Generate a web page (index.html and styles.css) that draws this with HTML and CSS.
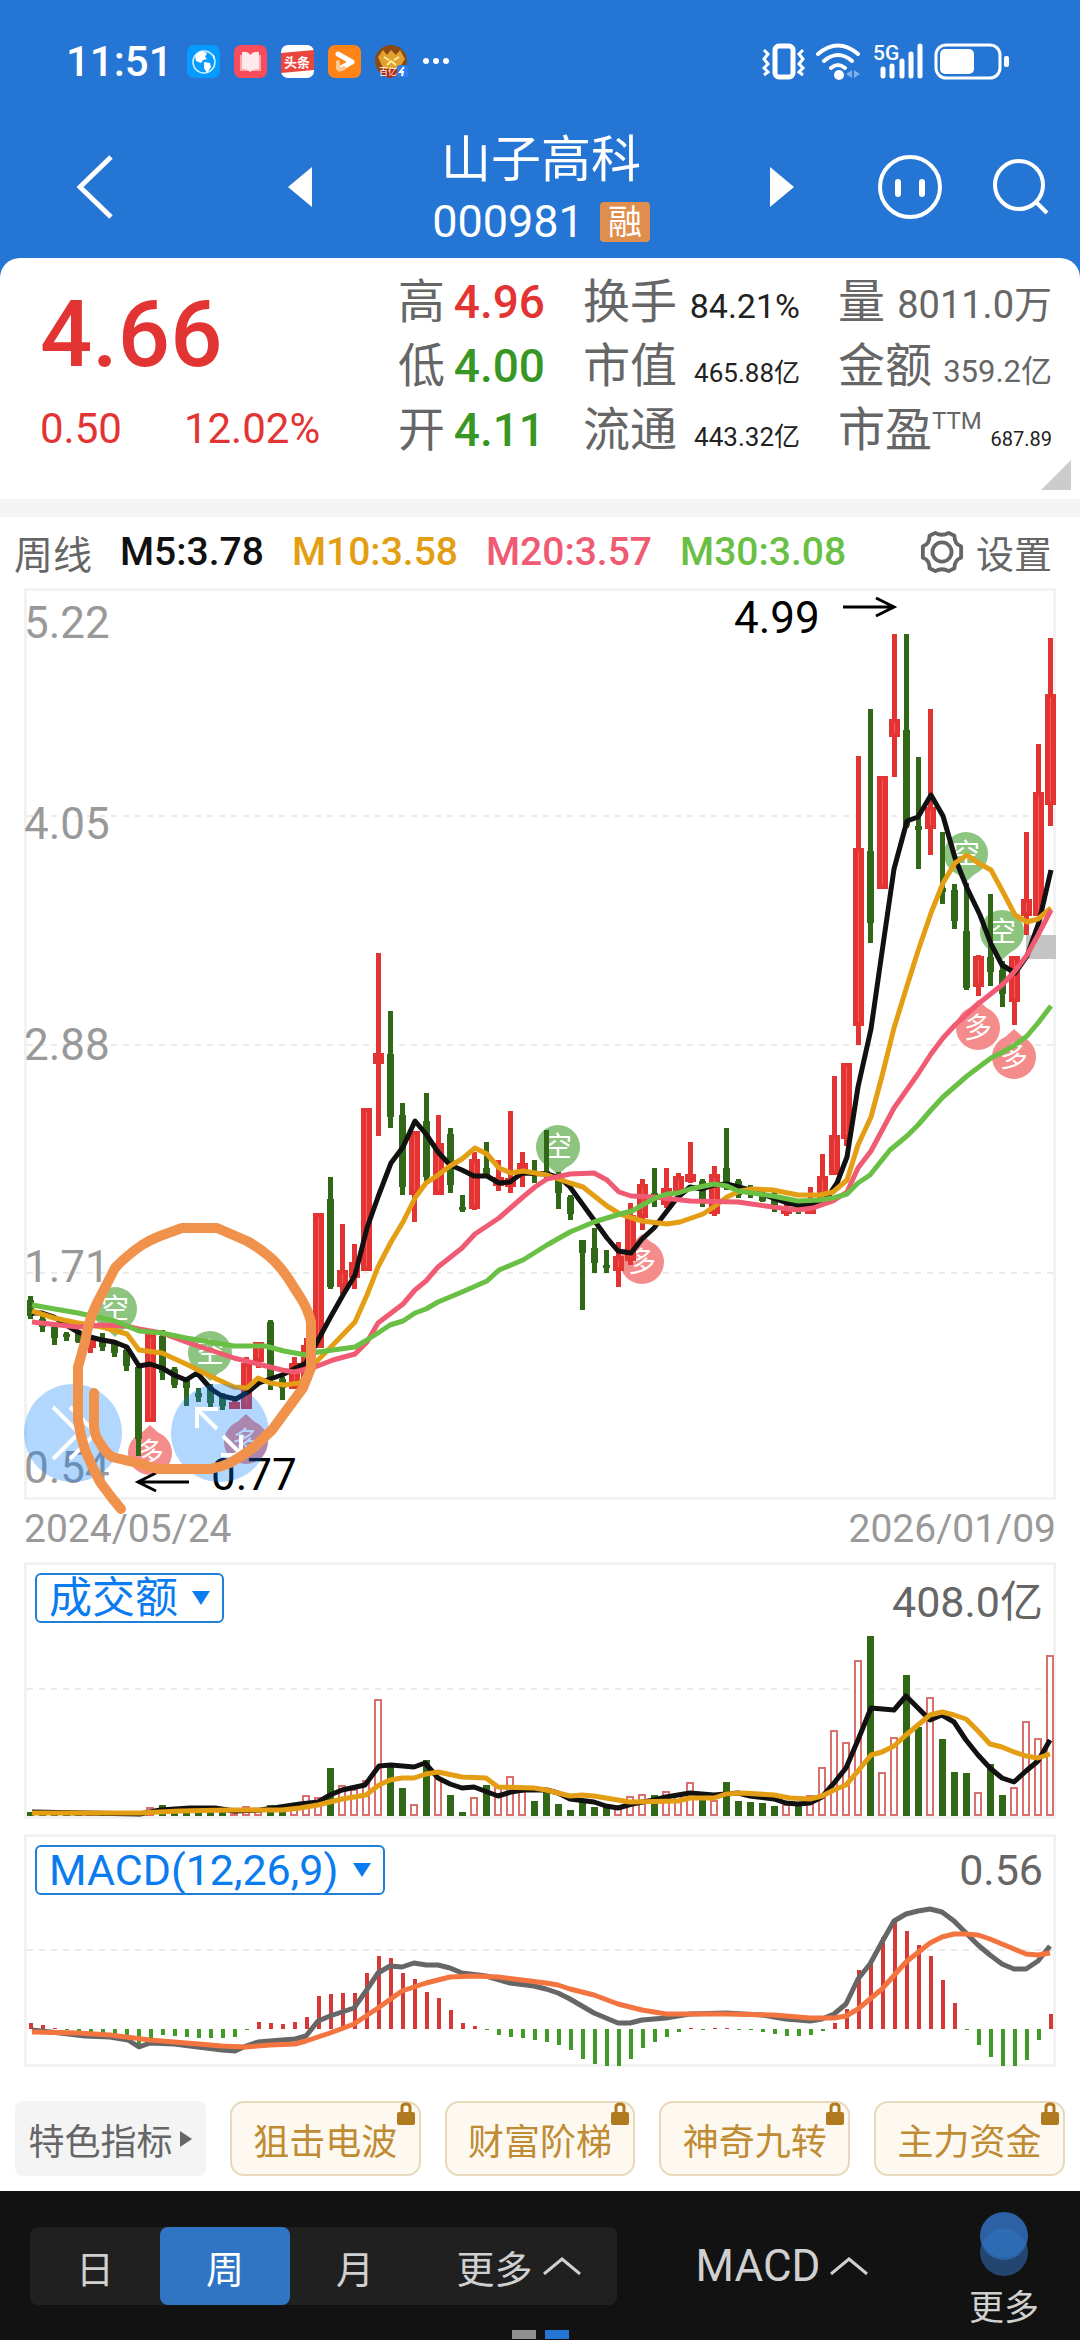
FILE: index.html
```html
<!DOCTYPE html>
<html lang="zh-CN">
<head>
  <meta charset="UTF-8">
  <meta name="viewport" content="width=device-width, initial-scale=1.0">
  <title>山子高科 000981</title>
  <link rel="stylesheet" href="styles.css">
</head>
<body>
  <header class="top">
    <div class="status">
      <span class="time">11:51</span>
      <svg class="app" viewBox="0 0 33 33"><rect width="33" height="33" rx="7" fill="#069cff"/><circle cx="17" cy="17" r="11" fill="none" stroke="#cfeeff" stroke-width="1.5"/><path d="M8 10l6-4 6 2-2 4 2 2-4 1-2 3-5-2zM17 17l6 1 1 4-4 6-3-5zM26 9l2 3-2 2z" fill="#fff"/></svg>
      <svg class="app" viewBox="0 0 33 33"><rect width="33" height="33" rx="7" fill="#fa4c5a"/><path d="M6 10h21v16H6z" fill="#fda6ab"/><path d="M8 7q6-1 8 3 3-4 9-3v17q-6 0-9 3-2-3-8-3z" fill="#ffe9ea"/></svg>
      <svg class="app" viewBox="0 0 33 33"><rect width="33" height="33" rx="7" fill="#fff"/><path d="M0 8l33-3v20L0 28z" fill="#ea4640"/><text x="16" y="22" class="app-name">头条</text></svg>
      <svg class="app" viewBox="0 0 33 33"><rect width="33" height="33" rx="7" fill="#ff8416"/><path d="M10 9l14 8-11 6" fill="none" stroke="#fff" stroke-width="5" stroke-linecap="round" stroke-linejoin="round"/><path d="M10 17v6q1 3 6 0" fill="none" stroke="#ffc892" stroke-width="4" stroke-linecap="round"/></svg>
      <svg class="app" viewBox="0 0 33 33"><circle cx="16" cy="16" r="16" fill="#8a4a14"/><path d="M3 12l5-7 4 5 4-5 5 5 4-5 5 9-6 9-8 4-8-4z" fill="#e2a02f"/><path d="M9 12l5 3M24 12l-5 3M12 20l4-4 5 4" stroke="#fff0a0" stroke-width="2" fill="none"/><path d="M4 24h20v5l-8 4-8-2z" fill="#b02a12"/><text x="13" y="30" class="app-tag">百亿</text><rect x="22" y="20" width="11" height="12" rx="3" fill="#2f7df4"/><path d="M29 22l-4 5h3l-1 4" stroke="#fff" stroke-width="2" fill="none"/></svg>
      <svg class="dots" viewBox="0 0 28 8"><circle cx="4" cy="4" r="3" fill="#fff"/><circle cx="14" cy="4" r="3" fill="#fff"/><circle cx="24" cy="4" r="3" fill="#fff"/></svg>
      <svg class="signals" viewBox="0 -6 248 52">
        <g fill="none" stroke="#fff">
          <rect x="13" y="5" width="18" height="31" rx="4" stroke-width="5"/>
          <path d="M2 9l4 4-4 5 4 5-4 4 4 4-4 3M41 9l-4 4 4 5-4 5 4 4-4 4 4 3" stroke-width="3"/>
          <path d="M56 13q20-17 40 0M62 20q14-12 28 0M69 27q7-6 14 0" stroke-width="4" stroke-linecap="round"/>
          <path d="M121 28v7M130 25v10M140 20v15M149 13v22M158 5v30" stroke-width="5" stroke-linecap="round"/>
          <rect x="174" y="4" width="64" height="33" rx="10" stroke-width="3"/>
        </g>
        <circle cx="77" cy="34" r="5" fill="#fff"/>
        <path d="M84 33l6-4v8zM98 33l-6-4v8z" fill="#7fb0ea"/>
        <text x="111" y="19" class="net">5G</text>
        <rect x="178" y="8" width="34" height="25" rx="5" fill="#fff"/>
        <rect x="242" y="15" width="5" height="11" rx="2" fill="#fff"/>
      </svg>
    </div>
    <nav class="nav">
      <button class="icon back" aria-label="返回"><svg viewBox="0 0 36 66"><path d="M34 3L3 33l31 30" fill="none" stroke="#fff" stroke-width="5"/></svg></button>
      <div class="switcher">
        <button class="icon arrow" aria-label="上一只"><svg viewBox="0 0 24 40"><path d="M24 0v40L0 20z" fill="#fff"/></svg></button>
        <div class="stock">
          <h1>山子高科</h1>
          <p><span>000981</span><span class="badge">融</span></p>
        </div>
        <button class="icon arrow" aria-label="下一只"><svg viewBox="0 0 24 40"><path d="M0 0v40l24-20z" fill="#fff"/></svg></button>
      </div>
      <button class="icon face" aria-label="助手"><svg viewBox="0 0 66 66"><circle cx="33" cy="33" r="30" fill="none" stroke="#fff" stroke-width="4"/><path d="M21 28v12M45 28v12" stroke="#fff" stroke-width="6" stroke-linecap="round"/></svg></button>
      <button class="icon search" aria-label="搜索"><svg viewBox="0 0 56 56"><circle cx="26" cy="26" r="24" fill="none" stroke="#fff" stroke-width="4"/><path d="M43 43l11 11" stroke="#fff" stroke-width="4"/></svg></button>
    </nav>
  </header>

  <section class="quote">
    <div class="price">
      <strong>4.66</strong>
      <p><span>0.50</span><span>12.02%</span></p>
    </div>
    <dl class="col">
      <div><dt>高</dt><dd class="big up">4.96</dd></div>
      <div><dt>低</dt><dd class="big down">4.00</dd></div>
      <div><dt>开</dt><dd class="big down">4.11</dd></div>
    </dl>
    <dl class="col">
      <div><dt>换手</dt><dd class="mid">84.21%</dd></div>
      <div><dt>市值</dt><dd class="small">465.88亿</dd></div>
      <div><dt>流通</dt><dd class="small">443.32亿</dd></div>
    </dl>
    <dl class="col">
      <div><dt>量</dt><dd class="vol">8011.0万</dd></div>
      <div><dt>金额</dt><dd class="amount">359.2亿</dd></div>
      <div><dt>市盈<sup>TTM</sup></dt><dd class="tiny">687.89</dd></div>
    </dl>
    <svg class="corner" viewBox="0 0 30 30"><path d="M30 0v30H0z" fill="#ccc"/></svg>
  </section>

  <main>
    <div class="legend">
      <span class="period">周线</span>
      <span class="m5">M5:3.78</span>
      <span class="m10">M10:3.58</span>
      <span class="m20">M20:3.57</span>
      <span class="m30">M30:3.08</span>
      <button class="settings">
        <svg viewBox="0 0 46 46"><path d="M16 3q7 4 14 0l6 3q0 9 7 11v12q-7 2-7 11l-6 3q-7-4-14 0l-6-3q0-9-7-11V17q7-2 7-11z" fill="none" stroke="#666" stroke-width="4" stroke-linejoin="round"/><circle cx="23" cy="23" r="10" fill="none" stroke="#666" stroke-width="4"/></svg>
        设置
      </button>
    </div>

    <div class="panel">
      <svg id="kline" class="chart" viewBox="27 591 1026 906"></svg>
    </div>
    <div class="dates"><span>2024/05/24</span><span>2026/01/09</span></div>

    <div class="panel">
      <div class="panel-head">
        <label class="picker">
          <select aria-label="成交指标"><option>成交额</option></select>
          <svg viewBox="0 0 18 14"><path d="M0 0h18L9 14z" fill="#0a7cf0"/></svg>
        </label>
        <span>408.0亿</span>
      </div>
      <svg id="volume" class="chart" viewBox="27 1631 1026 185"></svg>
    </div>

    <div class="panel macd">
      <div class="panel-head">
        <label class="picker">
          <select aria-label="技术指标"><option>MACD(12,26,9)</option></select>
          <svg viewBox="0 0 18 14"><path d="M0 0h18L9 14z" fill="#0a7cf0"/></svg>
        </label>
        <span>0.56</span>
      </div>
      <svg id="macd" class="chart" viewBox="27 1903 1026 161"></svg>
    </div>

    <div class="chips">
      <button class="chip plain">特色指标<svg viewBox="0 0 12 16"><path d="M0 0l12 8-12 8z" fill="#666"/></svg></button>
      <button class="chip">狙击电波<svg class="lock" viewBox="0 0 18 24"><path d="M5 11V5q0-3 4-3t4 3v6" fill="none" stroke="#b27a1f" stroke-width="3"/><rect y="10" width="18" height="13" rx="2" fill="#b27a1f"/></svg></button>
      <button class="chip">财富阶梯<svg class="lock" viewBox="0 0 18 24"><path d="M5 11V5q0-3 4-3t4 3v6" fill="none" stroke="#b27a1f" stroke-width="3"/><rect y="10" width="18" height="13" rx="2" fill="#b27a1f"/></svg></button>
      <button class="chip">神奇九转<svg class="lock" viewBox="0 0 18 24"><path d="M5 11V5q0-3 4-3t4 3v6" fill="none" stroke="#b27a1f" stroke-width="3"/><rect y="10" width="18" height="13" rx="2" fill="#b27a1f"/></svg></button>
      <button class="chip">主力资金<svg class="lock" viewBox="0 0 18 24"><path d="M5 11V5q0-3 4-3t4 3v6" fill="none" stroke="#b27a1f" stroke-width="3"/><rect y="10" width="18" height="13" rx="2" fill="#b27a1f"/></svg></button>
    </div>
  </main>

  <footer class="bottom">
    <div class="tabs">
      <button>日</button>
      <button class="active">周</button>
      <button>月</button>
      <button class="wide">更多<svg viewBox="0 0 38 18"><path d="M1 17L19 2l18 15" fill="none" stroke="#d0d0d0" stroke-width="3"/></svg></button>
    </div>
    <button class="indicator">MACD<svg viewBox="0 0 38 18"><path d="M1 17L19 2l18 15" fill="none" stroke="#d0d0d0" stroke-width="3"/></svg></button>
    <button class="more">
      <svg viewBox="0 0 48 64"><circle cx="24" cy="40" r="24" fill="#24456f"/><circle cx="24" cy="24" r="24" fill="#2c62a5"/><path d="M2 31a24 24 0 0 1 44 0 24 24 0 0 1-44 0" fill="#2d6bb3"/></svg>
      更多
    </button>
    <div class="pages"><i></i><i class="on"></i></div>
  </footer>

  <script src="chart.js"></script>
</body>
</html>
```
FILE: styles.css
```css
* {
  box-sizing: border-box;
}
body {
  margin: 0;
  font-family: Roboto, "Noto Sans CJK SC", sans-serif;
  background: #fff;
  color: #666;
}
h1, p, dl, dd {
  margin: 0;
}
button, select {
  font: inherit;
  color: inherit;
  border: none;
  background: none;
  padding: 0;
}
svg {
  display: block;
  flex: none;
}
.top {
  background: #2576d4;
  color: #fff;
}
.status {
  display: flex;
  align-items: center;
  gap: 14px;
  height: 122px;
  padding: 0 70px 0 66px;
}
.time {
  font-size: 42px;
  font-weight: 500;
}
.app {
  width: 33px;
  height: 33px;
}
.app-name {
  font-size: 13px;
  font-weight: 700;
  fill: #fff;
  text-anchor: middle;
}
.app-tag {
  font-size: 9px;
  fill: #fff;
  text-anchor: middle;
}
.dots {
  width: 28px;
}
.signals {
  width: 248px;
  margin-left: auto;
}
.net {
  font-size: 21px;
  font-weight: 500;
  fill: #fff;
}
.nav {
  display: flex;
  align-items: center;
  height: 136px;
  padding: 0 31px 6px 77px;
}
.back svg {
  width: 36px;
}
.switcher {
  flex: 1;
  display: flex;
  align-items: center;
  justify-content: space-between;
  margin: 0 83px 0 175px;
}
.arrow svg {
  width: 24px;
}
.stock {
  padding-top: 6px;
  text-align: center;
}
.stock h1 {
  font-size: 50px;
  font-weight: 400;
  line-height: 64px;
}
.stock p {
  display: flex;
  align-items: center;
  justify-content: center;
  gap: 16px;
  font-size: 45px;
  line-height: 60px;
}
.badge {
  padding: 0 8px;
  border-radius: 4px;
  background: #e08e4e;
  font-size: 34px;
  line-height: 40px;
}
.face svg {
  width: 66px;
}
.search {
  margin-left: 50px;
}
.search svg {
  width: 56px;
}

.quote {
  position: relative;
  display: grid;
  grid-template-columns: 320fr 147fr 217fr 214fr;
  column-gap: 38px;
  padding: 12px 28px 37px 40px;
  border-radius: 20px 20px 0 0;
  background: #fff;
  box-shadow: 0 0 0 20px #2576d4;
  clip-path: inset(0);
}
.price {
  color: #e33434;
}
.price strong {
  display: block;
  font-size: 92px;
  font-weight: 500;
  line-height: 130px;
}
.price p {
  display: flex;
  gap: 62px;
  font-size: 42px;
  line-height: 58px;
}
.col div {
  display: flex;
  justify-content: space-between;
  align-items: baseline;
  height: 64px;
  line-height: 64px;
  white-space: nowrap;
}
.col dt {
  font-size: 47px;
}
.col sup {
  font-size: 24px;
  line-height: 24px;
}
.big {
  font-size: 46px;
  font-weight: 500;
}
.mid {
  font-size: 34px;
  color: #222;
}
.small {
  font-size: 26px;
  color: #222;
}
.vol {
  font-size: 38px;
}
.amount {
  font-size: 31px;
}
.tiny {
  font-size: 20px;
  color: #222;
}
.up {
  color: #e33434;
}
.down {
  color: #389624;
}
.corner {
  position: absolute;
  right: 9px;
  bottom: 9px;
  width: 30px;
}

main {
  border-top: 18px solid #f4f4f4;
}
.legend {
  display: flex;
  align-items: center;
  gap: 28px;
  height: 71px;
  padding: 0 28px 2px 14px;
  font-size: 39px;
  font-weight: 500;
}
.period {
  font-weight: 400;
}
.m5 { color: #111; }
.m10 { color: #e39e14; }
.m20 { color: #f05a72; }
.m30 { color: #6abf45; }
.settings {
  display: flex;
  align-items: center;
  gap: 12px;
  margin-left: auto;
  font-size: 38px;
  font-weight: 400;
}
.settings svg {
  width: 44px;
}
.panel {
  margin: 0 24px;
  border: 3px solid #f2f2f2;
}
.chart {
  width: 100%;
  overflow: visible;
}
.dates {
  display: flex;
  justify-content: space-between;
  padding: 0 24px 4px;
  color: #999;
  font-size: 39px;
  line-height: 58px;
}
/* the kline drawing spills over its own border and the date row */
#kline {
  position: relative;
  z-index: 1;
}
.macd {
  margin-top: 15px;
}
.panel-head {
  display: flex;
  align-items: center;
  justify-content: space-between;
  height: 66px;
  padding: 0 10px 0 8px;
  font-size: 43px;
}
.picker {
  display: flex;
  align-items: center;
  gap: 14px;
  height: 50px;
  padding: 0 12px;
  border: 2px solid #1f7fd6;
  border-radius: 6px;
  color: #0a7cf0;
}
.picker select {
  appearance: none;
  height: 46px;
  line-height: 46px;
}
.picker svg {
  width: 18px;
}
.chips {
  display: flex;
  gap: 24px;
  padding: 34px 15px 15px;
}
.chip {
  position: relative;
  flex: 1;
  display: flex;
  align-items: center;
  justify-content: center;
  height: 75px;
  border: 2px solid #e8d9bd;
  border-radius: 14px;
  background: #fdf9f1;
  color: #bf8b33;
  font-size: 36px;
}
.chip.plain {
  gap: 8px;
  border-color: #f4f4f4;
  border-radius: 8px;
  background: #f4f4f4;
  color: #666;
}
.plain svg {
  width: 12px;
}
.lock {
  position: absolute;
  top: -1px;
  right: 4px;
  width: 18px;
}

.bottom {
  position: relative;
  display: flex;
  align-items: center;
  height: 150px;
  padding: 0 40px 0 30px;
  background: #121212;
  color: #d0d0d0;
  font-size: 38px;
}
.tabs {
  display: flex;
  flex: 587;
  height: 78px;
  border-radius: 8px;
  background: #202020;
}
.tabs button {
  flex: 130;
}
.tabs .wide {
  flex: 197;
}
.tabs .active {
  border-radius: 8px;
  background: #3075c4;
  color: #fff;
}
.wide, .indicator {
  display: flex;
  align-items: center;
  justify-content: center;
  gap: 10px;
}
.wide svg, .indicator svg {
  width: 38px;
}
.indicator {
  flex: 330;
  font-size: 44px;
}
.more {
  display: flex;
  flex-direction: column;
  align-items: center;
  gap: 8px;
  width: 72px;
  margin-left: 21px;
  padding-top: 14px;
  font-size: 35px;
  line-height: 50px;
}
.more svg {
  width: 48px;
}
.pages {
  position: absolute;
  left: 0;
  right: 0;
  bottom: 2px;
  display: flex;
  justify-content: center;
  gap: 9px;
}
.pages i {
  width: 24px;
  height: 9px;
  background: #909090;
}
.pages .on {
  background: #2576d4;
}

/* chart parts */
.chart .grid {
  stroke: #ebebeb;
  stroke-width: 2;
  stroke-dasharray: 6 6;
}
.chart polyline {
  fill: none;
  stroke-width: 5;
  stroke-linejoin: round;
}
.chart .scale {
  font-size: 44px;
  fill: #999;
}
.chart .extreme {
  font-size: 44px;
  fill: #000;
}
.chart .pointer {
  fill: none;
  stroke: #000;
  stroke-width: 3;
}
.chart .mark {
  font-size: 28px;
  fill: #fff;
  text-anchor: middle;
}
```
FILE: chart.js
```js
const RED = '#e33434';
const GREEN = '#316817';
const STEP = 12;
const X0 = 31;

// r/g, high, body top, body bottom, low
const candles = [
  ['g',1296,1300,1316,1319],['g',1313,1319,1327,1332],['g',1325,1327,1338,1345],['g',1332,1334,1337,1341],
  ['g',1330,1333,1342,1343],['r',1337,1339,1348,1353],['g',1333,1338,1347,1351],['g',1340,1344,1353,1357],
  ['g',1346,1350,1366,1371],['g',1365,1367,1439,1456],['r',1334,1334,1422,1422],['g',1330,1336,1373,1380],
  ['g',1367,1369,1385,1388],['g',1377,1380,1388,1406],['g',1388,1393,1397,1402],['g',1384,1387,1403,1407],
  ['g',1393,1397,1406,1410],['r',1400,1402,1409,1409],['r',1357,1363,1409,1409],['r',1342,1342,1362,1368],
  ['g',1320,1322,1380,1390],['g',1377,1379,1388,1400],['r',1357,1363,1389,1389],['r',1338,1345,1380,1385],
  ['r',1213,1213,1348,1348],['g',1177,1199,1287,1289],['r',1224,1270,1287,1294],['r',1244,1262,1278,1289],
  ['r',1108,1108,1271,1271],['r',953,1053,1064,1136],['g',1011,1054,1117,1128],['g',1103,1115,1187,1195],
  ['r',1131,1131,1195,1222],['g',1093,1121,1177,1181],['r',1115,1143,1195,1195],['g',1128,1134,1185,1193],
  ['g',1195,1207,1210,1212],['r',1152,1159,1209,1210],['g',1142,1168,1176,1177],['r',1160,1177,1186,1191],
  ['r',1111,1178,1187,1193],['r',1152,1163,1175,1187],['g',1160,1172,1175,1183],['g',1130,1171,1176,1180],
  ['g',1172,1176,1193,1209],['g',1195,1197,1214,1220],['g',1240,1240,1253,1310],['g',1228,1248,1263,1273],
  ['g',1250,1265,1267,1273],['r',1242,1256,1271,1287],['r',1203,1215,1261,1265],['r',1179,1184,1218,1230],
  ['g',1168,1193,1196,1207],['r',1168,1188,1205,1208],['r',1173,1176,1193,1195],['r',1142,1174,1182,1183],
  ['g',1179,1181,1200,1207],['r',1166,1174,1214,1216],['g',1128,1168,1183,1190],['g',1179,1181,1195,1198],
  ['g',1185,1187,1195,1198],['g',1188,1195,1201,1202],['g',1192,1199,1207,1212],['r',1200,1209,1214,1216],
  ['g',1200,1206,1212,1214],['r',1187,1207,1214,1214],['r',1154,1176,1200,1203],['r',1076,1135,1175,1175],
  ['r',1063,1063,1139,1146],['r',756,848,1026,1045],['g',709,851,923,943],['r',776,776,889,889],
  ['r',634,719,737,777],['g',634,730,826,828],['g',757,826,830,869],['r',709,807,829,855],
  ['g',832,888,892,904],['g',884,890,921,929],['g',883,931,988,990],['r',955,956,987,996],
  ['g',894,957,972,986],['g',961,970,994,1007],['r',956,956,1002,1025],['r',832,899,916,935],
  ['r',744,792,916,916],['r',638,694,805,826]
];

const volumes = [
  4,3,3,3,3,3,3,3,3,5,9,11,7,6,5,6,6,4,10,7,11,7,12,21,19,48,31,27,36,117,49,28,12,56,38,21,4,19,31,29,40,25,
  15,27,12,6,14,9,10,11,20,22,21,25,22,34,16,16,34,15,14,13,10,12,11,21,49,86,74,156,180,44,79,141,89,119,77,
  44,43,24,52,21,29,95,78,161
];

const bars = [
  6,4,1,-1,-2,-3,-4,-5,-8,-15,-9,-6,-7,-8,-9,-9,-9,-8,-1,7,6,5,7,12,33,35,36,36,56,73,71,56,50,37,31,19,6,3,
  -1,-6,-8,-9,-11,-13,-16,-21,-30,-35,-37,-37,-30,-19,-13,-8,-3,1,-1,1,1,-1,-1,-3,-5,-7,-7,-6,-2,6,20,59,69,
  92,107,98,84,73,49,26,-1,-16,-28,-37,-37,-31,-11,15
];

const ma = {
  '#111': '32,1313 42,1313 54,1317 66,1325 78,1332 90,1337 102,1340 114,1342 127,1347 139,1366 150,1364 162,1368 174,1375 186,1380 197,1373 211,1389 222,1396 236,1399 248,1392 259,1383 270,1379 282,1375 294,1369 306,1363 316,1344 330,1318 343,1295 355,1275 367,1228 378,1197 391,1163 403,1147 415,1121 426,1134 438,1152 450,1165 462,1170 474,1176 487,1176 499,1183 510,1182 522,1173 547,1174 560,1178 570,1187 594,1220 607,1238 618,1251 631,1253 642,1239 654,1228 677,1198 690,1187 702,1189 714,1185 727,1184 750,1190 773,1198 787,1203 798,1205 813,1204 827,1198 837,1183 847,1157 858,1087 871,1029 882,952 894,869 907,821 918,817 931,795 943,816 955,858 967,888 980,915 991,944 1002,965 1015,973 1027,956 1039,922 1051,870',
  '#e39e14': '32,1311 54,1318 78,1323 102,1327 127,1334 139,1350 162,1353 186,1364 210,1376 234,1387 247,1388 258,1378 270,1383 284,1385 300,1383 318,1360 330,1348 355,1322 367,1295 378,1267 391,1242 403,1222 415,1198 426,1183 438,1175 450,1166 462,1159 475,1148 487,1154 499,1168 511,1173 523,1171 547,1175 570,1183 583,1187 607,1206 620,1214 642,1221 667,1224 680,1222 703,1214 715,1206 727,1197 740,1191 752,1189 773,1190 798,1195 820,1195 833,1192 847,1180 858,1145 871,1117 882,1076 894,1028 907,986 918,951 931,913 943,883 955,863 967,855 978,863 991,870 1003,892 1015,915 1027,922 1038,919 1051,908',
  '#f05a72': '32,1322 78,1327 102,1325 126,1326 139,1329 162,1333 186,1342 210,1350 234,1358 258,1364 282,1370 294,1372 315,1367 333,1360 355,1354 367,1342 378,1323 403,1304 415,1290 426,1281 438,1267 462,1248 475,1234 499,1218 523,1197 535,1187 547,1179 570,1174 594,1173 607,1180 619,1192 631,1196 654,1197 690,1201 738,1202 773,1207 798,1210 813,1208 833,1201 847,1192 858,1168 871,1151 894,1108 918,1074 931,1054 943,1038 955,1025 978,1004 1002,985 1015,971 1027,955 1038,935 1051,910',
  '#6abf45': '32,1305 78,1313 115,1321 139,1331 162,1333 186,1338 210,1342 234,1346 265,1346 284,1351 306,1355 318,1352 355,1347 367,1340 378,1333 390,1325 403,1321 415,1313 426,1309 438,1302 462,1292 487,1281 499,1270 523,1260 547,1245 570,1232 594,1222 620,1214 632,1211 655,1198 667,1194 678,1193 690,1189 714,1184 727,1186 738,1191 773,1196 798,1201 820,1200 833,1198 847,1194 858,1183 870,1175 890,1150 907,1136 918,1125 931,1110 943,1097 967,1076 991,1058 1003,1052 1015,1045 1027,1036 1038,1023 1051,1006'
};

const volumeLines = {
  '#111': '32,1812 140,1814 160,1810 190,1808 215,1808 235,1811 260,1810 280,1807 300,1804 318,1802 330,1795 342,1790 365,1785 379,1766 391,1765 414,1767 425,1763 438,1778 450,1784 462,1788 474,1787 498,1796 511,1792 523,1790 547,1790 558,1793 570,1799 594,1802 606,1806 618,1808 632,1804 654,1800 666,1797 690,1793 714,1795 738,1793 750,1796 774,1799 786,1803 798,1804 810,1803 822,1797 834,1783 846,1768 858,1740 871,1708 894,1710 906,1696 918,1708 930,1720 942,1715 954,1722 966,1740 978,1755 990,1768 1002,1778 1014,1782 1026,1771 1038,1761 1050,1740',
  '#e39e14': '32,1813 140,1813 180,1811 230,1810 282,1810 300,1808 318,1805 330,1802 342,1799 366,1795 379,1785 390,1780 402,1778 414,1778 426,1774 438,1772 462,1777 486,1778 498,1787 534,1788 546,1790 570,1796 582,1795 594,1796 630,1802 678,1801 690,1798 714,1798 726,1794 742,1793 774,1795 790,1798 810,1799 822,1796 834,1790 846,1785 858,1771 871,1755 882,1752 894,1746 906,1735 918,1725 930,1715 942,1712 954,1715 966,1719 978,1731 990,1744 1002,1747 1014,1752 1026,1756 1038,1758 1050,1754'
};

const macdLines = {
  '#666': '32,2030 60,2033 85,2036 110,2037 128,2040 139,2047 150,2043 174,2044 198,2047 222,2050 235,2051 246,2046 258,2042 282,2040 295,2039 306,2036 318,2021 330,2016 354,2008 366,1991 378,1973 390,1966 402,1967 414,1963 426,1965 438,1965 450,1968 462,1973 486,1976 510,1983 534,1986 546,1989 558,1993 570,1999 582,2006 594,2013 606,2018 618,2023 630,2023 642,2020 666,2018 690,2014 726,2013 762,2015 786,2019 810,2021 822,2019 834,2014 846,2004 858,1979 870,1964 882,1942 894,1921 906,1914 918,1911 930,1909 942,1912 954,1921 966,1933 978,1945 990,1955 1002,1964 1014,1969 1026,1969 1038,1961 1050,1946',
  '#f47440': '32,2032 78,2033 110,2035 150,2040 198,2044 222,2046 246,2047 270,2045 295,2044 306,2041 330,2033 354,2024 366,2016 378,2008 402,1991 426,1983 450,1977 474,1976 498,1977 522,1980 546,1983 558,1985 570,1989 594,1995 618,2004 642,2010 666,2014 726,2014 774,2015 810,2018 834,2018 846,2016 858,2009 882,1989 906,1962 930,1943 942,1937 954,1934 966,1934 978,1935 990,1939 1014,1949 1026,1954 1038,1955 1050,1953'
};

const marks = [
  ['空',115,1309],['空',210,1353],['空',558,1147],['空',966,854],['空',1002,932],
  ['多',150,1453],['多',246,1442],['多',642,1262],['多',978,1028],['多',1014,1057]
];

const rect = (x, y, w, h, fill) => `<rect x="${x}" y="${y}" width="${w}" height="${h}" fill="${fill}"/>`;
const grid = y => `<path class="grid" d="M27 ${y}H1053"/>`;
const lines = set => Object.entries(set).map(([c, p]) => `<polyline stroke="${c}" points="${p}"/>`).join('');

function drawMark([ch, x, y]) {
  const short = ch === '空';
  const tip = short ? `M${x - 12} ${y + 17}L${x} ${y + 28}L${x + 12} ${y + 17}z` : `M${x - 12} ${y - 17}L${x} ${y - 28}L${x + 12} ${y - 17}z`;
  const color = short ? '#8cc480' : '#f58c8c';
  return `<circle cx="${x}" cy="${y}" r="22" fill="${color}"/><path d="${tip}" fill="${color}"/>` +
    `<text class="mark" x="${x}" y="${y + 10}">${ch}</text>`;
}

function drawCandle([type, high, top, bottom, low], i) {
  const x = X0 + i * STEP;
  const h = Math.max(bottom - top, 3);
  if (type === 'g') {
    return rect(x - 3, high, 5, low - high, GREEN) + rect(x - 4, top, 7, h, GREEN);
  }
  return rect(x - 3, high, 5, low - high, RED) + rect(x - 6, top, 11, h, RED) +
    (h > 12 ? rect(x - 1, top + 4, 1, h - 8, '#ff5a58') : '');
}

function drawKline() {
  let out = [816, 1045, 1273].map(grid).join('');
  out += [['5.22',638],['4.05',839],['2.88',1060],['1.71',1282],['0.54',1483]]
    .map(([t, y]) => `<text class="scale" x="24" y="${y}">${t}</text>`).join('');
  out += rect(1026, 935, 30, 24, '#c4c4c4');
  out += marks.map(drawMark).join('') + candles.map(drawCandle).join('') + lines(ma);
  out += '<text class="extreme" x="734" y="633">4.99</text><path class="pointer" d="M843 607h50M876 598l18 9-18 9"/>';
  out += '<text class="extreme" x="211" y="1490">0.77</text><path class="pointer" d="M189 1482h-50M156 1473l-18 9 18 9"/>';
  // floating round buttons
  out += '<g fill="#007aff" fill-opacity=".3"><circle cx="73" cy="1433" r="49"/><circle cx="220" cy="1433" r="49"/></g>';
  out += '<path d="M53 1407l26 26-26 26M70 1407l26 26-26 26M217 1429l-20-20M197 1428v-19h21M223 1436l18 18M241 1435v20h-20" fill="none" stroke="#fff" stroke-width="4"/>';
  // hand drawn loop
  out += '<path d="M94 1393V1427Q95 1437 100 1443Q105 1452 112 1457L133 1462L158 1469H210Q221 1467 230 1463Q242 1456 253 1448L272 1430L283 1415L303 1388L311 1368V1322Q308 1310 302 1300L288 1278Q279 1265 270 1257Q258 1247 247 1241L217 1228H182L160 1236Q150 1240 142 1245Q126 1256 115 1268L97 1303Q88 1322 85 1342L78 1367V1420Q80 1435 85 1450Q92 1467 100 1482L112 1498L121 1509" fill="none" stroke="#f0924c" stroke-width="10" stroke-linecap="round" stroke-linejoin="round"/>';
  document.getElementById('kline').innerHTML = out;
}

function drawVolume() {
  const base = 1816;
  const cols = volumes.map((v, i) => {
    const x = X0 + i * STEP;
    return candles[i][0] === 'g'
      ? rect(x - 4, base - v, 7, v, GREEN)
      : `<rect x="${x - 4}" y="${base - v + 1}" width="6" height="${v - 2}" fill="#fff" stroke="#d9706e" stroke-width="2"/>`;
  });
  document.getElementById('volume').innerHTML = grid(1689) + cols.join('') + lines(volumeLines);
}

function drawMacd() {
  const zero = 2029;
  const cols = bars.map((v, i) => {
    const x = X0 + i * STEP - 2;
    return v > 0 ? rect(x, zero - v, 4, v, '#d63a38') : rect(x, zero, 4, -v, '#3f9a2a');
  });
  document.getElementById('macd').innerHTML = grid(1950) + cols.join('') + lines(macdLines);
}

drawKline();
drawVolume();
drawMacd();
```
